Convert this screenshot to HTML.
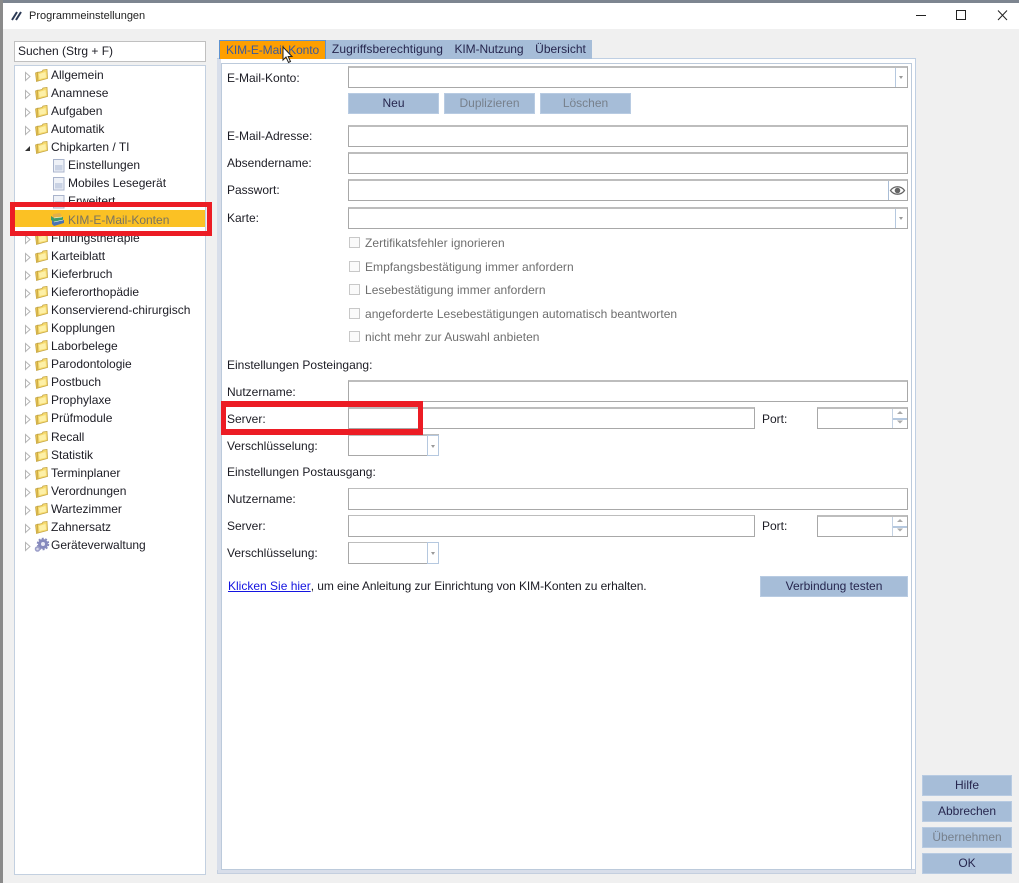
<!DOCTYPE html>
<html><head><meta charset="utf-8"><style>
html,body{margin:0;padding:0;background:#f0f0f0}
body{width:1019px;height:883px;overflow:hidden;position:relative}
#w{position:absolute;left:0;top:0;width:1019px;height:883px;overflow:hidden;background:#f0f0f0;font:12px "Liberation Sans",sans-serif;color:#1c1c24;filter:blur(.3px)}
#w div,#w a,#w span{position:absolute;box-sizing:border-box;white-space:nowrap}
#w .t{line-height:16px;height:16px}
#w .f{background:#fff;border:1px solid #a8a8a8;border-top:2px solid #bdbdbd;height:22px}
#w .b{background:#a6bdd8;border:1px solid #b8cbe2;text-align:center;color:#26264e;line-height:19px;height:21px}
#w .d{color:#77808c}
#w .tab{background:#a6bdd8;height:19px;top:40px;line-height:19px;text-align:center;color:#26264e}
#w .g{color:#6e6e6e;letter-spacing:.035px}
#w .c{width:11px;height:11px;border:1px solid #c8c8c8;background:#fafafa;left:349px}
#w .dd{width:12px;border-left:1px solid #b5c8df;background:#fff;top:0;bottom:0;right:0}
#w .dd:after{content:"";position:absolute;left:3px;top:8px;border:2.500px solid transparent;border-top:3px solid #999;border-bottom:0}
#w .dn{border:1px solid #b5c8df;top:-1px;bottom:-1px;right:-1px;width:12px;background:#fff}
#w .dn:after{content:"";position:absolute;left:3px;top:9px;border:2.500px solid transparent;border-top:3px solid #999;border-bottom:0}
#w .sp{right:0;top:0;bottom:0;width:15px;background:#fff;border-left:1px solid #c4d2e3}
#w .sp div{left:0;right:0;top:9px;height:2px;background:#b5c8df}
svg{position:absolute;overflow:visible}
</style></head><body><div id="w">
<div style="left:0;top:0;width:1019px;height:3px;background:#7d8590"></div>
<div style="left:0;top:0;width:3px;height:883px;background:#8a8a8a"></div>
<div style="left:3px;top:3px;width:1016px;height:26px;background:#fff"></div>
<svg style="left:11px;top:10px" width="12" height="12"><path d="M1 10L6 2M5 10L10 2" stroke="#2c3a55" stroke-width="2" fill="none"/></svg>
<div class="t" style="left:29px;top:8px;font-size:11px;letter-spacing:0;color:#222">Programmeinstellungen</div>
<svg style="left:910px;top:8px" width="105" height="16"><path d="M6 7.500H16" stroke="#222"/><rect x="46.500" y="2.500" width="9" height="9" fill="none" stroke="#222"/><path d="M88 2.500L97 12M97 2.500L88 12" stroke="#222" fill="none"/></svg>

<div style="left:14px;top:41px;width:192px;height:21px;background:#fff;border:1px solid #c0c0c0"></div>
<div class="t" style="left:18px;top:43px">Suchen (Strg + F)</div>
<div style="left:14px;top:65px;width:192px;height:810px;background:#fff;border:1px solid #c3d0e0"></div>

<div class="t" style="left:51px;top:67px">Allgemein</div><div class="t" style="left:51px;top:85px">Anamnese</div><div class="t" style="left:51px;top:103px">Aufgaben</div><div class="t" style="left:51px;top:121px">Automatik</div><div class="t" style="left:51px;top:139px">Chipkarten / TI</div><div class="t" style="left:68px;top:157px">Einstellungen</div><div class="t" style="left:68px;top:175px">Mobiles Lesegerät</div><div class="t" style="left:68px;top:193px">Erweitert</div><div class="t" style="left:51px;top:230px">Füllungstherapie</div><div class="t" style="left:51px;top:248px">Karteiblatt</div><div class="t" style="left:51px;top:266px">Kieferbruch</div><div class="t" style="left:51px;top:284px">Kieferorthopädie</div><div class="t" style="left:51px;top:302px">Konservierend-chirurgisch</div><div class="t" style="left:51px;top:320px">Kopplungen</div><div class="t" style="left:51px;top:338px">Laborbelege</div><div class="t" style="left:51px;top:356px">Parodontologie</div><div class="t" style="left:51px;top:374px">Postbuch</div><div class="t" style="left:51px;top:392px">Prophylaxe</div><div class="t" style="left:51px;top:410px">Prüfmodule</div><div class="t" style="left:51px;top:429px">Recall</div><div class="t" style="left:51px;top:447px">Statistik</div><div class="t" style="left:51px;top:465px">Terminplaner</div><div class="t" style="left:51px;top:483px">Verordnungen</div><div class="t" style="left:51px;top:501px">Wartezimmer</div><div class="t" style="left:51px;top:519px">Zahnersatz</div><div class="t" style="left:51px;top:537px">Geräteverwaltung</div>

<svg style="left:0;top:0" width="220" height="560">
<defs>
<g id="fo"><path d="M0.500 4L3 3L3 12L1.500 12.500Z" fill="#e8c250" stroke="#c4a544" stroke-width=".7"/><path d="M2.500 3.500L7 2.500L8 1L12 0.500L12.500 9.500L3 12Z" fill="#f7db6f" stroke="#c4a544" stroke-width=".8"/><path d="M4 5L10.500 3L11 8.500L4.500 10Z" fill="#fdf0a8"/></g>
<path id="ar" d="M.5 .5L5 4.500L.5 8.500Z" fill="#fff" stroke="#b4b4b4"/>
<g id="doc"><rect x=".5" y=".5" width="10.500" height="12.500" fill="#eef1f7" stroke="#a9b4cc"/><rect x="2" y="6" width="7.500" height="5.500" fill="#c9d2e4"/></g>
</defs>
<use href="#ar" x="25" y="72"/><use href="#fo" x="35" y="69"/>
<use href="#ar" x="25" y="90"/><use href="#fo" x="35" y="87"/>
<use href="#ar" x="25" y="108"/><use href="#fo" x="35" y="105"/>
<use href="#ar" x="25" y="126"/><use href="#fo" x="35" y="123"/>
<path d="M25 151L30 151L30 146Z" fill="#333"/><use href="#fo" x="35" y="141"/>
<use href="#doc" x="53" y="159"/><use href="#doc" x="53" y="177"/><use href="#doc" x="53" y="195"/>
<use href="#ar" x="25" y="235"/><use href="#fo" x="35" y="232"/>
<use href="#ar" x="25" y="253"/><use href="#fo" x="35" y="250"/>
<use href="#ar" x="25" y="271"/><use href="#fo" x="35" y="268"/>
<use href="#ar" x="25" y="289"/><use href="#fo" x="35" y="286"/>
<use href="#ar" x="25" y="307"/><use href="#fo" x="35" y="304"/>
<use href="#ar" x="25" y="325"/><use href="#fo" x="35" y="322"/>
<use href="#ar" x="25" y="343"/><use href="#fo" x="35" y="340"/>
<use href="#ar" x="25" y="361"/><use href="#fo" x="35" y="358"/>
<use href="#ar" x="25" y="379"/><use href="#fo" x="35" y="376"/>
<use href="#ar" x="25" y="397"/><use href="#fo" x="35" y="394"/>
<use href="#ar" x="25" y="415"/><use href="#fo" x="35" y="412"/>
<use href="#ar" x="25" y="434"/><use href="#fo" x="35" y="431"/>
<use href="#ar" x="25" y="452"/><use href="#fo" x="35" y="449"/>
<use href="#ar" x="25" y="470"/><use href="#fo" x="35" y="467"/>
<use href="#ar" x="25" y="488"/><use href="#fo" x="35" y="485"/>
<use href="#ar" x="25" y="506"/><use href="#fo" x="35" y="503"/>
<use href="#ar" x="25" y="524"/><use href="#fo" x="35" y="521"/>
<use href="#ar" x="25" y="542"/>
<circle cx="43" cy="544" r="3.500" fill="#e8e8f4" stroke="#8589bd" stroke-width="3"/>
<circle cx="43" cy="544" r="5.500" fill="none" stroke="#8589bd" stroke-width="1.500" stroke-dasharray="2 1.500"/>
<circle cx="37.500" cy="549" r="2" fill="#d8d8ea" stroke="#9a9dc8" stroke-width="1.500"/>
</svg>

<div style="left:15px;top:210px;width:190px;height:17px;background:#fbc124"></div>
<svg style="left:51px;top:213px" width="14" height="14"><path d="M2 1L9 0L11 3L2 5Z" fill="#e2b04a"/><path d="M0 3L3 5L12 4L12 7L3 9L0 7Z" fill="#3f9a6a"/><path d="M1 7L3 9L13 7L13 10L3 13L1 11Z" fill="#4a74b4"/><path d="M3 5L11 4M3 9L12 7" stroke="#fff" stroke-width=".6"/></svg>
<div class="t" style="left:68px;top:212px;color:#7a7460">KIM-E-Mail-Konten</div>
<div style="left:10px;top:202px;width:202px;height:34px;border:5px solid #ec1c24"></div>

<div style="left:217px;top:58px;width:699px;height:816px;background:#fff;border:1px solid #bfcfe3"></div>
<div style="left:217px;top:869px;width:699px;height:5px;background:#d8deea;border:1px solid #c4cfdf"></div>
<div style="left:217px;top:59px;width:4px;height:811px;background:#d8deea"></div>
<div style="left:221px;top:63px;width:691px;height:807px;background:#fff;border:1px solid #bccadb"></div>

<div class="tab" style="left:219px;width:107px;background:#fe9f00;color:#3b5a9c;border:1px solid #5f93d0;border-bottom:0;letter-spacing:-.1px">KIM-E-Mail-Konto</div>
<div class="tab" style="left:326px;width:123px;letter-spacing:.1px">Zugriffsberechtigung</div>
<div class="tab" style="left:449px;width:80px;letter-spacing:-.1px">KIM-Nutzung</div>
<div class="tab" style="left:529px;width:63px">Übersicht</div>
<svg style="left:282px;top:46px" width="12" height="18"><path d="M1 1V14L4 11L6.500 16.500L8.500 15.500L6.200 10.500L10 10.500Z" fill="#fff" stroke="#222"/></svg>

<div class="t" style="left:227px;top:70px">E-Mail-Konto:</div>
<div class="f" style="left:348px;top:66px;width:560px"><div class="dd"></div></div>
<div class="b" style="left:348px;top:93px;width:91px">Neu</div>
<div class="b d" style="left:444px;top:93px;width:91px;color:#77808c">Duplizieren</div>
<div class="b d" style="left:540px;top:93px;width:91px;color:#77808c">Löschen</div>
<div class="t" style="left:227px;top:128px">E-Mail-Adresse:</div>
<div class="f" style="left:348px;top:125px;width:560px"></div>
<div class="t" style="left:227px;top:155px">Absendername:</div>
<div class="f" style="left:348px;top:152px;width:560px"></div>
<div class="t" style="left:227px;top:182px">Passwort:</div>
<div class="f" style="left:348px;top:179px;width:560px"><div style="right:0;top:0;bottom:0;width:19px;border-left:1px solid #a9bdd6"></div></div>
<svg style="left:890px;top:185px" width="15" height="11"><path d="M.5 5.500C4 .5 11 .5 14.500 5.500C11 10.500 4 10.500 .5 5.500Z" fill="#fff" stroke="#666" stroke-width="1.300"/><circle cx="7.500" cy="5.500" r="2.800" fill="#666"/></svg>
<div class="t" style="left:227px;top:210px">Karte:</div>
<div class="f" style="left:348px;top:207px;width:560px"><div class="dd"></div></div>

<div class="c" style="top:237px"></div><div class="t g" style="left:365px;top:235px">Zertifikatsfehler ignorieren</div>
<div class="c" style="top:261px"></div><div class="t g" style="left:365px;top:259px">Empfangsbestätigung immer anfordern</div>
<div class="c" style="top:284px"></div><div class="t g" style="left:365px;top:282px">Lesebestätigung immer anfordern</div>
<div class="c" style="top:308px"></div><div class="t g" style="left:365px;top:306px">angeforderte Lesebestätigungen automatisch beantworten</div>
<div class="c" style="top:331px"></div><div class="t g" style="left:365px;top:329px">nicht mehr zur Auswahl anbieten</div>

<div class="t" style="left:227px;top:357px">Einstellungen Posteingang:</div>
<div class="t" style="left:227px;top:384px">Nutzername:</div>
<div class="f" style="left:348px;top:380px;width:560px"></div>
<div class="t" style="left:227px;top:411px">Server:</div>
<div class="f" style="left:348px;top:407px;width:407px"></div>
<div class="t" style="left:762px;top:411px">Port:</div>
<div class="f" style="left:817px;top:407px;width:91px"><div class="sp"><div></div></div></div>
<svg style="left:894px;top:410px" width="12" height="16"><path d="M3 4L6 1L9 4ZM3 10.500L9 10.500L6 13.500Z" fill="#aaa"/></svg>
<div class="t" style="left:227px;top:438px">Verschlüsselung:</div>
<div class="f" style="left:348px;top:434px;width:91px"><div class="dn"></div></div>

<div class="t" style="left:227px;top:464px">Einstellungen Postausgang:</div>
<div class="t" style="left:227px;top:491px">Nutzername:</div>
<div class="f" style="left:348px;top:488px;width:560px;border-top-width:1px"></div>
<div class="t" style="left:227px;top:518px">Server:</div>
<div class="f" style="left:348px;top:515px;width:407px;border-top-width:1px"></div>
<div class="t" style="left:762px;top:518px">Port:</div>
<div class="f" style="left:817px;top:515px;width:91px"><div class="sp"><div></div></div></div>
<svg style="left:894px;top:518px" width="12" height="16"><path d="M3 4L6 1L9 4ZM3 10.500L9 10.500L6 13.500Z" fill="#aaa"/></svg>
<div class="t" style="left:227px;top:545px">Verschlüsselung:</div>
<div class="f" style="left:348px;top:542px;width:91px;border-top-width:1px"><div class="dn"></div></div>

<div class="t" style="left:228px;top:578px"><span style="position:static;color:#1414e0;text-decoration:underline">Klicken Sie hier</span><span style="position:static;letter-spacing:-.08px">, um eine Anleitung zur Einrichtung von KIM-Konten zu erhalten.</span></div>
<div class="b" style="left:760px;top:576px;width:148px">Verbindung testen</div>

<div style="left:221px;top:401px;width:202px;height:34px;border:5px solid #ec1c24;border-top-width:6px;border-bottom-width:6px"></div>

<div class="b" style="left:922px;top:775px;width:90px">Hilfe</div>
<div class="b" style="left:922px;top:801px;width:90px">Abbrechen</div>
<div class="b d" style="left:922px;top:827px;width:90px;color:#77808c">Übernehmen</div>
<div class="b" style="left:922px;top:853px;width:90px">OK</div>
</div></body></html>
